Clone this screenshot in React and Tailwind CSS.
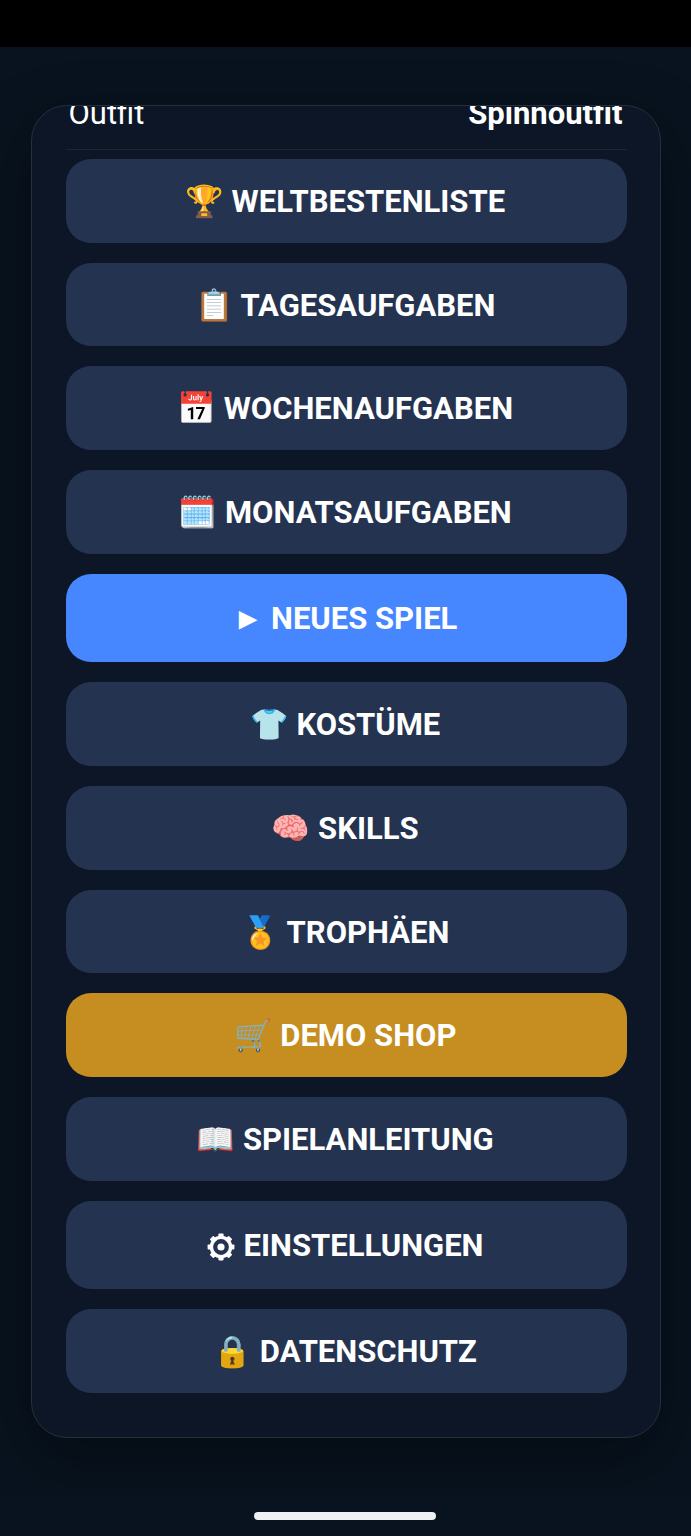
const Gear = () => (
  <svg viewBox="0 0 28 28" className="inline-block w-[28px] h-[28px] align-[-5px]" aria-hidden="true">
    {[0, 45, 90, 135, 180, 225, 270, 315].map((a) => (
      <rect key={a} x="11.4" y="0.6" width="5.2" height="5.4" rx="0.8" fill="#fff" transform={`rotate(${a} 14 14)`} />
    ))}
    <circle cx="14" cy="14" r="9.6" fill="none" stroke="#fff" strokeWidth="3.4" />
    <circle cx="14" cy="14" r="3.6" fill="#fff" />
  </svg>
);

const rows = [
  ["🏆", "WELTBESTENLISTE", "bg-[#243350]", "h-[83.7px]"],
  ["📋", "TAGESAUFGABEN", "bg-[#243350]", "h-[83.7px]"],
  ["📅", "WOCHENAUFGABEN", "bg-[#243350]", "h-[83.7px]"],
  ["🗓️", "MONATSAUFGABEN", "bg-[#243350]", "h-[83.7px]"],
  ["►", "NEUES SPIEL", "bg-[#4686ff]", "h-[88.5px]"],
  ["👕", "KOSTÜME", "bg-[#243350]", "h-[83.7px]"],
  ["🧠", "SKILLS", "bg-[#243350]", "h-[83.7px]"],
  ["🏅", "TROPHÄEN", "bg-[#243350]", "h-[83.7px]"],
  ["🛒", "DEMO SHOP", "bg-[#c68d20]", "h-[83.7px]"],
  ["📖", "SPIELANLEITUNG", "bg-[#243350]", "h-[83.7px]"],
  [null, "EINSTELLUNGEN", "bg-[#243350]", "h-[88.5px]"],
  ["🔒", "DATENSCHUTZ", "bg-[#243350]", "h-[83.7px]"],
];

export default function App() {
  return (
    <div className="h-[1536px] flex flex-col bg-[#08131f] font-['Roboto',sans-serif] text-white overflow-hidden">
      <div className="h-[47px] bg-black shrink-0" />
      <div className="h-[1449px] shrink-0 overflow-hidden pl-[31px] pr-[30px] pt-[58px]">
        <div className="h-[1333px] rounded-[36px] border border-[#262f3d] bg-[#0c1626] overflow-hidden px-[33.5px] shadow-[0_20px_60px_rgba(0,0,0,0.4)]">
          <div className="-mt-[10px] h-[54px] flex justify-between items-start border-b border-[#1c2635] pl-[3px] pr-[4px] text-[31px] leading-[36px]">
            <span>Outfit</span>
            <span className="font-bold">Spinnoutfit</span>
          </div>
          <div className="mt-[9px] flex flex-col gap-[20px]">
            {rows.map(([icon, label, bg, h]) => (
              <button key={label} className={`${h} ${bg} rounded-[25px] text-[31px] font-bold flex items-center justify-center pt-[3px] pr-[2px]`}>
                <span className="whitespace-pre">
                  {icon ? `${icon} ` : <Gear />}
                  {icon ? null : <span className="inline-block w-[9px]" />}
                  {label}
                </span>
              </button>
            ))}
          </div>
        </div>
      </div>
      <div className="flex-1 flex justify-center pt-[16px] pr-[1px]">
        <div className="h-[7.5px] w-[182px] rounded-[4px] bg-[#eef0f2]" />
      </div>
    </div>
  );
}
